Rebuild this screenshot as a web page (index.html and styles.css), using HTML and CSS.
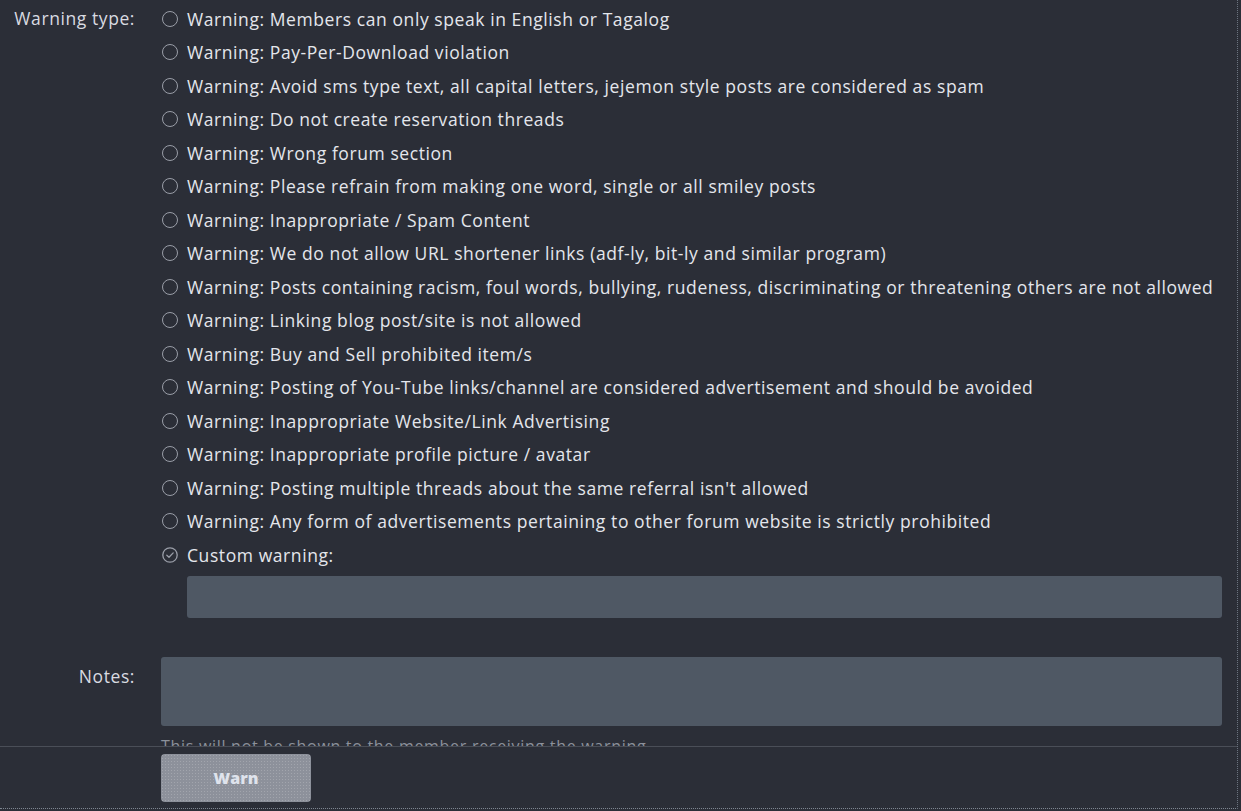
FILE: index.html
```html
<!DOCTYPE html>
<html>
<head>
<meta charset="utf-8">
<link rel="stylesheet" href="styles.css">
</head>
<body>
<div class="frame">
  <div class="scroller">
    <div class="form-row">
      <div class="label">Warning type:</div>
      <ul class="options">
        <li class="opt"><span class="radio"></span><span>Warning: Members can only speak in English or Tagalog</span></li>
        <li class="opt"><span class="radio"></span><span>Warning: Pay-Per-Download violation</span></li>
        <li class="opt"><span class="radio"></span><span>Warning: Avoid sms type text, all capital letters, jejemon style posts are considered as spam</span></li>
        <li class="opt"><span class="radio"></span><span>Warning: Do not create reservation threads</span></li>
        <li class="opt"><span class="radio"></span><span>Warning: Wrong forum section</span></li>
        <li class="opt"><span class="radio"></span><span>Warning: Please refrain from making one word, single or all smiley posts</span></li>
        <li class="opt"><span class="radio"></span><span>Warning: Inappropriate / Spam Content</span></li>
        <li class="opt"><span class="radio"></span><span>Warning: We do not allow URL shortener links (adf-ly, bit-ly and similar program)</span></li>
        <li class="opt"><span class="radio"></span><span>Warning: Posts containing racism, foul words, bullying, rudeness, discriminating or threatening others are not allowed</span></li>
        <li class="opt"><span class="radio"></span><span>Warning: Linking blog post/site is not allowed</span></li>
        <li class="opt"><span class="radio"></span><span>Warning: Buy and Sell prohibited item/s</span></li>
        <li class="opt"><span class="radio"></span><span>Warning: Posting of You-Tube links/channel are considered advertisement and should be avoided</span></li>
        <li class="opt"><span class="radio"></span><span>Warning: Inappropriate Website/Link Advertising</span></li>
        <li class="opt"><span class="radio"></span><span>Warning: Inappropriate profile picture / avatar</span></li>
        <li class="opt"><span class="radio"></span><span>Warning: Posting multiple threads about the same referral isn't allowed</span></li>
        <li class="opt"><span class="radio"></span><span>Warning: Any form of advertisements pertaining to other forum website is strictly prohibited</span></li>
        <li class="opt"><span class="radio checked"><svg viewBox="0 0 16 16" width="16" height="16"><circle cx="8" cy="8" r="7.2" fill="none" stroke="#9a9ea8" stroke-width="1.3"/><path d="M4.8 8.2 L7 10.3 L11.2 5.9" fill="none" stroke="#9a9ea8" stroke-width="1.3" stroke-linecap="round" stroke-linejoin="round"/></svg></span><span>Custom warning:</span></li>
      </ul>
    </div>
    <div class="custom-wrap"><div class="input custom"></div></div>
    <div class="form-row notes-row">
      <div class="label notes-label">Notes:</div>
      <div class="notes-col">
        <div class="input notes"></div>
        <div class="hint">This will not be shown to the member receiving the warning.</div>
      </div>
    </div>
  </div>
  <div class="footer">
    <button class="btn" type="button">Warn</button>
  </div>
</div>
</body>
</html>
```

FILE: styles.css
```css
html, body {
  margin: 0;
  padding: 0;
  background: #2b2e37;
  height: 811px;
  overflow: hidden;
}
body {
  font-family: "Open Sans", "DejaVu Sans", sans-serif;
  color: #e4e6ec;
  font-size: 17.5px;
  letter-spacing: 0.58px;
}
.frame {
  width: 1237px;
  height: 808px;
  border-right: 1px dotted #6c7480;
  border-bottom: 1px dotted #7d8590;
  display: flex;
  flex-direction: column;
}
.scroller {
  height: 746px;
  overflow: hidden;
  padding-right: 15px;
}
.form-row {
  display: grid;
  grid-template-columns: 134px 1fr;
  column-gap: 27px;
}
.label {
  text-align: right;
  color: #d9dbe1;
  height: 33.5px;
  line-height: 33.5px;
  margin-top: 2px;
  white-space: nowrap;
  margin-right: -1px;
}
.options {
  list-style: none;
  margin: 0;
  padding: 2px 0 0 0;
}
.opt {
  display: flex;
  align-items: center;
  height: 33.5px;
  gap: 9px;
  white-space: nowrap;
}
.radio {
  width: 14px;
  height: 14px;
  border: 1.4px solid #9a9ea8;
  border-radius: 50%;
  flex: none;
  margin-left: 1px;
}
.radio.checked {
  border: none;
  width: 16px;
  height: 16px;
  margin-left: 1px;
  display: flex;
}
.custom-wrap {
  padding: 4px 0 0 187px;
}
.input {
  background: #4f5864;
  border-radius: 3px;
}
.custom {
  height: 42px;
}
.notes-row {
  margin-top: 39px;
}
.notes-label {
  margin-top: 3px;
}
.notes {
  height: 69px;
}
.hint {
  color: #8c919b;
  font-size: 16px;
  letter-spacing: 0.7px;
  margin-top: 9px;
  white-space: nowrap;
}
.footer {
  border-top: 1px solid #4a4e57;
  padding: 7px 0 0 161px;
  flex: 1;
}
.btn {
  width: 150px;
  height: 48px;
  border: none;
  border-radius: 4px;
  background-color: #8d919b;
  background-image: radial-gradient(circle, rgba(255,255,255,0.18) 0.6px, transparent 0.9px);
  background-size: 3px 3px;
  color: #dfe3ec;
  font-family: "Open Sans", sans-serif;
  font-weight: 800;
  font-size: 16px;
  letter-spacing: 0;
  padding: 0;
}
```
